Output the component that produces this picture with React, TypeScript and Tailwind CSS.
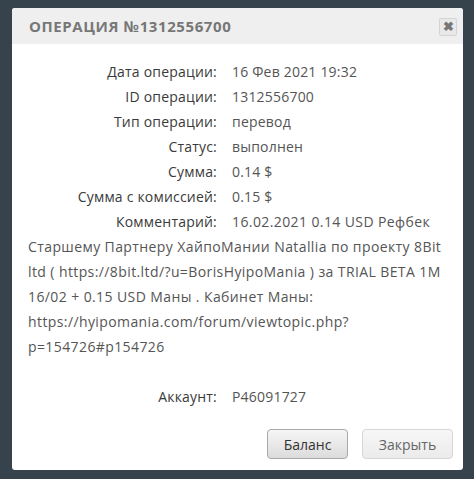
import * as React from "react";

const rows: [string, string][] = [
  ["Дата операции:", "16 Фев 2021 19:32"],
  ["ID операции:", "1312556700"],
  ["Тип операции:", "перевод"],
  ["Статус:", "выполнен"],
  ["Сумма:", "0.14 $"],
  ["Сумма с комиссией:", "0.15 $"],
];

const comment =
  "16.02.2021 0.14 USD Рефбек Старшему Партнеру ХайпоМании Natallia по проекту 8Bit ltd ( https://8bit.ltd/?u=BorisHyipoMania ) за TRIAL BETA 1M 16/02 + 0.15 USD Маны . Кабинет Маны: https://hyipomania.com/forum/viewtopic.php?p=154726#p154726";

function Row({ label, children, wide }: { label: string; children: React.ReactNode; wide?: boolean }) {
  return (
    <div className="break-words">
      <span className="inline-block w-[189px] pr-[15px] box-content text-right text-[#3a3a3a] tracking-[0.2px]">{label}</span>
      <span className={wide ? "text-[#555] tracking-[0.4px]" : "text-[#555] tracking-[0.2px]"}>{children}</span>
    </div>
  );
}

export default function App() {
  return (
    <div
      className="w-[474px] h-[479px] bg-[#36434c] pt-2 pl-3"
      style={{ fontFamily: "'Open Sans', 'Noto Sans', sans-serif" }}
    >
      <div className="w-[451px] h-[462px] bg-white rounded-[3px] overflow-hidden flex flex-col">
        <div className="h-9 bg-[#efefef] flex items-center justify-between pl-[17px] pr-[6px]">
          <span className="text-[15px] font-bold tracking-[0.6px] text-[#777]">ОПЕРАЦИЯ №1312556700</span>
          <button className="w-[18px] h-[18px] mt-[1px] rounded-[2px] border border-[#d4d4d4] bg-[#e9e9e9] text-[#777] text-[13px] font-bold leading-none flex items-center justify-center">
            ✖
          </button>
        </div>
        <div className="pl-4 pr-[20px] pt-[15px] text-[14px] leading-[25px]">
          {rows.map(([l, v]) => (
            <Row key={l} label={l}>
              {v}
            </Row>
          ))}
          <Row label="Комментарий:" wide>
            {comment}
          </Row>
          <div className="mt-[25px]">
            <Row label="Аккаунт:">P46091727</Row>
          </div>
        </div>
        <div className="flex justify-end gap-[14px] pr-[10px] mt-[20px]">
          <button className="w-[81px] h-[30px] rounded-[4px] border border-[#a9a9a9] bg-gradient-to-b from-[#f6f6f6] to-[#dcdcdc] text-[14px] text-[#333]">
            Баланс
          </button>
          <button className="w-[91px] h-[30px] rounded-[4px] border border-[#d6d6d6] bg-gradient-to-b from-[#f7f7f7] to-[#ebebeb] text-[14px] text-[#666]">
            Закрыть
          </button>
        </div>
      </div>
    </div>
  );
}
